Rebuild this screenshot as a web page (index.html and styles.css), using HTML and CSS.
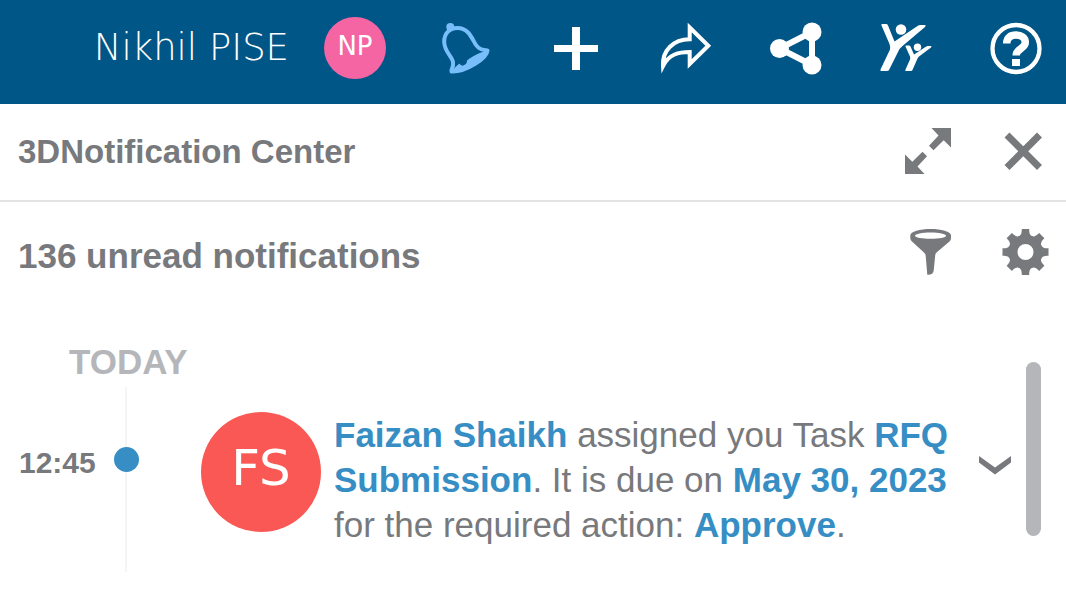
FILE: index.html
```html
<!DOCTYPE html>
<html lang="en">
<head>
    <meta charset="UTF-8">
    <meta name="viewport" content="width=device-width, initial-scale=1.0">
    <title>3DNotification Center</title>
    <link rel="stylesheet" href="styles.css">
</head>
<body>
    <header class="topbar">
        <span class="user-name">Nikhil PISE</span>
        <span class="avatar avatar-small">NP</span>
        <nav class="topbar-actions">
            <button type="button" class="icon-btn active" aria-label="Notifications">
                <svg viewBox="0 0 52 52" width="52" height="52">
                    <circle cx="11.3" cy="5" r="4" fill="currentColor"/>
                    <path d="M12.500 49.500C11.500 47 15 46 14 40C13 34 5.500 30 5.200 20C5 11 11 6 18.500 6C30 6 33 17 37 23C40 27.500 44 28 48.500 28.500C48 36 27 50 12.500 49.500Z" fill="none" stroke="currentColor" stroke-width="4" stroke-linejoin="round"/>
                    <path d="M48 29C41 30 34 34 28 38.500C28.500 42 23 46 20.500 41.500C18 43.500 16 45 13 49C26 51 46 40 49 29Z" fill="currentColor"/>
                </svg>
            </button>
            <button type="button" class="icon-btn" aria-label="Add">
                <svg viewBox="0 0 52 52" width="52" height="52">
                    <path d="M23 5h8v18h18v7H31v18h-8V30H5v-7h18z" fill="currentColor"/>
                </svg>
            </button>
            <button type="button" class="icon-btn" aria-label="Share">
                <svg viewBox="0 0 52 52" width="52" height="52">
                    <path d="M30.700 5.500L49.300 23.700L30.700 42V30C20 30 10 32 4 44C3 29 14 17.300 30.700 17.300Z" fill="none" stroke="currentColor" stroke-width="4"/>
                </svg>
            </button>
            <button type="button" class="icon-btn" aria-label="Network">
                <svg viewBox="0 0 52 52" width="52" height="52">
                    <path d="M43 10L10.500 26.500L43 43Z" fill="none" stroke="currentColor" stroke-width="6"/>
                    <circle cx="10.500" cy="26.500" r="9.500" fill="currentColor"/>
                    <circle cx="43" cy="10" r="9.500" fill="currentColor"/>
                    <circle cx="43" cy="43" r="9.500" fill="currentColor"/>
                </svg>
            </button>
            <button type="button" class="icon-btn" aria-label="Communities">
                <svg viewBox="0 0 52 52" width="52" height="52">
                    <g fill="currentColor">
                        <circle cx="22" cy="7.500" r="5.300"/>
                        <path d="M3 2H7.500Q8.500 2 9 3.500L15.500 19.500L38.500 4Q40 3 41.500 3H46Q47.500 3.500 46 5L23.500 24Q20.500 26.500 19.500 29L10 48Q9.500 49 8 49H2.500Q1 49 1.500 47.500L11 27.500Q11.500 25 10.500 22L2.500 3.500Q2 2 3 2Z"/>
                        <circle cx="38.500" cy="25.300" r="3.700"/>
                        <path d="M27 23.500H30Q31 23.500 31.500 24.500L35 32.500L46.500 25Q48 24 49 24H52Q53 24.500 52 25.500L40 34.500Q39 35.500 38.500 36.500L33.500 48Q33 49 32 49H27Q26 49 26.300 48L31 37.500Q31.500 36 31 34.500L26.500 24.500Q26.300 23.500 27 23.500Z"/>
                    </g>
                </svg>
            </button>
            <button type="button" class="icon-btn" aria-label="Help">
                <svg viewBox="0 0 52 52" width="52" height="52">
                    <circle cx="27" cy="26.500" r="23.500" fill="none" stroke="currentColor" stroke-width="4.300"/>
                    <path d="M17.700 21.500C17.700 15.500 21.500 13 27 13C32.500 13 36.300 15.500 36.300 20.500C36.300 26.500 27.200 26.500 27.200 33.500" fill="none" stroke="currentColor" stroke-width="7.500"/>
                    <path d="M23 37h8v7h-8z" fill="currentColor"/>
                </svg>
            </button>
        </nav>
    </header>

    <main class="panel">
        <div class="panel-header">
            <h1 class="panel-title">3DNotification Center</h1>
            <div class="panel-actions">
                <button type="button" class="icon-btn" aria-label="Expand">
                    <svg viewBox="0 0 48 48" width="48" height="48">
                        <path d="M26.500 0H46V19.500L38.700 12.300L28.500 22.300L24 17.800L33.500 7.500Z" fill="currentColor"/>
                        <path d="M19.500 46H0V26.500L7.300 33.700L17.500 23.700L22 28.200L12.500 38.500Z" fill="currentColor"/>
                    </svg>
                </button>
                <button type="button" class="icon-btn" aria-label="Close">
                    <svg viewBox="0 0 48 48" width="48" height="48">
                        <path d="M7 7L39.500 39.500M39.500 7L7 39.500" stroke="currentColor" stroke-width="7"/>
                    </svg>
                </button>
            </div>
        </div>

        <div class="summary">
            <h2 class="summary-title">136 unread notifications</h2>
            <div class="panel-actions">
                <button type="button" class="icon-btn" aria-label="Filter">
                    <svg viewBox="0 0 48 48" width="48" height="48">
                        <path fill-rule="evenodd" d="M25.700 1C36 1 46 3.500 46 7.500V10Q46 12 44.500 13.500L31.500 24.500Q30.300 25.500 30.200 27.500L28.700 42.500Q28.300 46.700 23 46.700H22.300L20.700 28Q20.500 26 19.500 25L7 13.500Q5.300 12 5.300 10V7.500C5.300 3.500 15 1 25.700 1ZM25.700 4.500C17 4.500 10 6 10 7.700S17 10.700 25.700 10.700S41 9.500 41 7.700S34 4.500 25.700 4.500Z" fill="currentColor"/>
                    </svg>
                </button>
                <button type="button" class="icon-btn" aria-label="Settings">
                    <svg viewBox="0 0 48 48" width="48" height="48">
                        <g transform="translate(25.500 24)" fill="currentColor">
                            <circle r="12.500" fill="none" stroke="currentColor" stroke-width="9"/>
                            <path id="tooth" d="M-7.500 -15C-4.500 -17 -3.700 -18 -3.700 -23H3.700C3.700 -18 4.500 -17 7.500 -15Z"/>
                            <use href="#tooth" transform="rotate(45)"/>
                            <use href="#tooth" transform="rotate(90)"/>
                            <use href="#tooth" transform="rotate(135)"/>
                            <use href="#tooth" transform="rotate(180)"/>
                            <use href="#tooth" transform="rotate(225)"/>
                            <use href="#tooth" transform="rotate(270)"/>
                            <use href="#tooth" transform="rotate(315)"/>
                        </g>
                    </svg>
                </button>
            </div>
        </div>

        <section class="feed">
            <div class="feed-list">
                <h3 class="day">TODAY</h3>
                <article class="entry">
                    <time class="entry-time">12:45</time>
                    <div class="timeline">
                        <span class="line line-top"></span>
                        <span class="dot"></span>
                        <span class="line"></span>
                    </div>
                    <span class="avatar avatar-large">FS</span>
                    <p class="message"><a href="#">Faizan Shaikh</a> assigned you Task <a href="#">RFQ Submission</a>. It is due on <b>May 30, 2023</b> for the required action: <b>Approve</b>.</p>
                    <button type="button" class="icon-btn chevron" aria-label="Show more">
                        <svg viewBox="0 0 34 22" width="34" height="22">
                            <path d="M1 1L17 12.500L33 1V7.500L17 19.500L1 7.500Z" fill="currentColor"/>
                        </svg>
                    </button>
                </article>
            </div>
            <div class="scrollbar"></div>
        </section>
    </main>
</body>
</html>
```

FILE: styles.css
```css
* {
    box-sizing: border-box;
}
body {
    margin: 0;
    font-family: "Liberation Sans", Arial, sans-serif;
    background-color: #fff;
    color: #77797c;
}
h1, h2, h3, p {
    margin: 0;
}
.icon-btn {
    display: block;
    padding: 0;
    border: none;
    background: none;
    color: inherit;
    cursor: pointer;
}
.icon-btn svg {
    display: block;
    overflow: visible;
}

/* top bar */
.topbar {
    display: flex;
    align-items: center;
    justify-content: flex-end;
    height: 104px;
    padding: 0 25px 8px;
    background-color: #005686;
    color: #fff;
}
.user-name {
    margin-right: 35px;
    font-family: "DejaVu Sans Light", "DejaVu Sans", sans-serif;
    font-size: 37px;
    font-weight: 200;
    line-height: 52px;
    white-space: nowrap;
}
.avatar {
    display: flex;
    flex-shrink: 0;
    align-items: center;
    justify-content: center;
    border-radius: 50%;
    color: #fff;
    font-family: "DejaVu Sans", sans-serif;
}
.avatar-small {
    width: 62px;
    height: 62px;
    margin-right: 53px;
    padding-bottom: 4px;
    background-color: #f564a3;
    font-size: 26px;
}
.avatar-large {
    width: 120px;
    height: 120px;
    margin: 25px 13px 0 62px;
    padding-bottom: 8px;
    background-color: #fa5855;
    font-size: 50px;
}
.topbar-actions {
    display: flex;
    gap: 58px;
}
.active {
    color: #78befa;
}

/* panel */
.panel-header, .summary {
    display: flex;
    justify-content: space-between;
    padding: 24px 18px;
}
.panel-header {
    align-items: center;
    border-bottom: 2px solid #e2e4e3;
}
.summary {
    align-items: flex-end;
    padding-top: 26px;
}
.panel-title {
    font-size: 33px;
    line-height: 40px;
}
.summary-title {
    font-size: 35px;
    line-height: 40px;
}
.panel-actions {
    display: flex;
    gap: 47px;
}

/* feed */
.feed {
    display: flex;
    padding: 42px 25px 0 19px;
}
.feed-list {
    flex: 1;
}
.day {
    padding-left: 50px;
    color: #b4b6ba;
    font-size: 35px;
    line-height: 40px;
}
.entry {
    display: flex;
    align-items: flex-start;
    margin-top: 5px;
}
.entry-time {
    width: 94px;
    margin-top: 56px;
    font-size: 30px;
    font-weight: bold;
    line-height: 40px;
}
.timeline {
    display: flex;
    flex-direction: column;
    flex-shrink: 0;
    align-items: center;
    align-self: stretch;
    width: 26px;
}
.line {
    flex: 1;
    width: 2px;
    background-color: #f4f5f6;
}
.line-top {
    flex: 0 0 60px;
}
.dot {
    align-self: flex-end;
    width: 25px;
    height: 25px;
    border-radius: 50%;
    background-color: #368ec4;
}
.message {
    flex: 1;
    padding: 25px 0;
    font-size: 35px;
    line-height: 45px;
}
.message a, .message b {
    color: #368ec4;
    font-weight: bold;
    text-decoration: none;
}
.chevron {
    margin: 68px 14px 0 18px;
}
.scrollbar {
    width: 15px;
    height: 174px;
    margin-top: 20px;
    border-radius: 8px;
    background-color: #b4b6ba;
}
```
